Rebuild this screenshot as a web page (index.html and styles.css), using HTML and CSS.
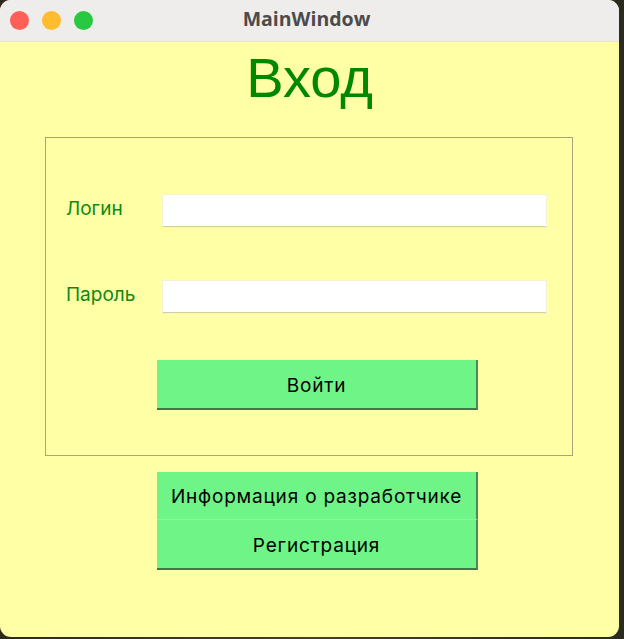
FILE: index.html
```html
<!DOCTYPE html>
<html lang="ru">
<head>
<meta charset="utf-8">
<title>MainWindow</title>
<link rel="stylesheet" href="styles.css">
</head>
<body>
<div class="window">
  <div class="titlebar">
    <div class="lights">
      <span class="light red"></span>
      <span class="light yellow"></span>
      <span class="light green"></span>
    </div>
    <div class="wintitle">MainWindow</div>
  </div>
  <div class="content">
    <h1 class="heading">Вход</h1>
    <div class="groupbox">
      <div class="row row-login">
        <label class="lbl">Логин</label>
        <div class="field"></div>
      </div>
      <div class="row row-pass">
        <label class="lbl">Пароль</label>
        <div class="field"></div>
      </div>
      <div class="btn btn-login">Войти</div>
    </div>
    <div class="btn-stack">
      <div class="btn btn-top">Информация о разработчике</div>
      <div class="btn btn-bottom">Регистрация</div>
    </div>
  </div>
</div>
</body>
</html>
```

FILE: styles.css
```css
html, body {
  margin: 0;
  padding: 0;
}
body {
  width: 624px;
  height: 639px;
  background: linear-gradient(90deg, #2d2a1c 0%, #4a3f22 50%, #2a2a1e 100%);
  overflow: hidden;
}
.window {
  width: 619px;
  height: 637px;
  background: #ffffa6;
  border-radius: 11px;
  overflow: hidden;
  display: flex;
  flex-direction: column;
}
.titlebar {
  height: 41px;
  flex: 0 0 41px;
  background: #efedec;
  border-bottom: 1px solid #e8e5c4;
  display: flex;
  align-items: center;
  position: relative;
}
.lights {
  display: flex;
  gap: 13px;
  padding-left: 10px;
}
.light {
  width: 19px;
  height: 19px;
  border-radius: 50%;
  display: block;
}
.red { background: #fe5f57; }
.yellow { background: #febc2e; }
.green { background: #28c840; }
.wintitle {
  position: absolute;
  left: 0;
  right: 0;
  top: 0;
  height: 41px;
  line-height: 38px;
  text-align: center;
  font-family: "Open Sans", "Liberation Sans", sans-serif;
  font-weight: 700;
  font-size: 19.5px;
  color: #4b4b4b;
  padding-right: 6px;
}
.content {
  flex: 1;
  display: flex;
  flex-direction: column;
}
.heading {
  margin: 4px 0 0 0;
  height: 91px;
  line-height: 64px;
  text-align: center;
  font-family: "Liberation Sans", Arial, sans-serif;
  font-weight: 400;
  font-size: 56px;
  color: #008800;
}
.groupbox {
  margin-left: 45px;
  width: 526px;
  height: 317px;
  border: 1px solid #a9a575;
  display: flex;
  flex-direction: column;
}
.row {
  display: flex;
  align-items: center;
  height: 32px;
}
.row-login { margin-top: 57px; }
.row-pass { margin-top: 54px; }
.lbl {
  width: 97px;
  padding-left: 20px;
  font-family: "Inter", "Liberation Sans", sans-serif;
  font-size: 19px;
  color: #0d8a10;
  margin-top: -5px;
}
.field {
  width: 383px;
  height: 31px;
  background: #ffffff;
  border-bottom: 1px solid #d2cf9a;
  box-shadow: 0 0 0 1px #f4f2d0;
}
.btn {
  width: 319px;
  background: #6ff487;
  border-right: 2px solid #4a8c4f;
  border-bottom: 2px solid #3f7a44;
  display: flex;
  align-items: center;
  justify-content: center;
  padding-top: 2px;
  box-sizing: border-box;
  font-family: "Inter", "Liberation Sans", sans-serif;
  font-size: 19px;
  letter-spacing: 0.8px;
  color: #000000;
}
.btn-login {
  margin-top: 47px;
  margin-left: 111px;
  width: 321px;
  height: 50px;
}
.btn-stack {
  margin-top: 16px;
  margin-left: 157px;
  display: flex;
  flex-direction: column;
}
.btn-top {
  width: 321px;
  height: 48px;
  border-bottom: 1px solid #8cf5a0;
}
.btn-bottom {
  width: 321px;
  height: 50px;
}
```
